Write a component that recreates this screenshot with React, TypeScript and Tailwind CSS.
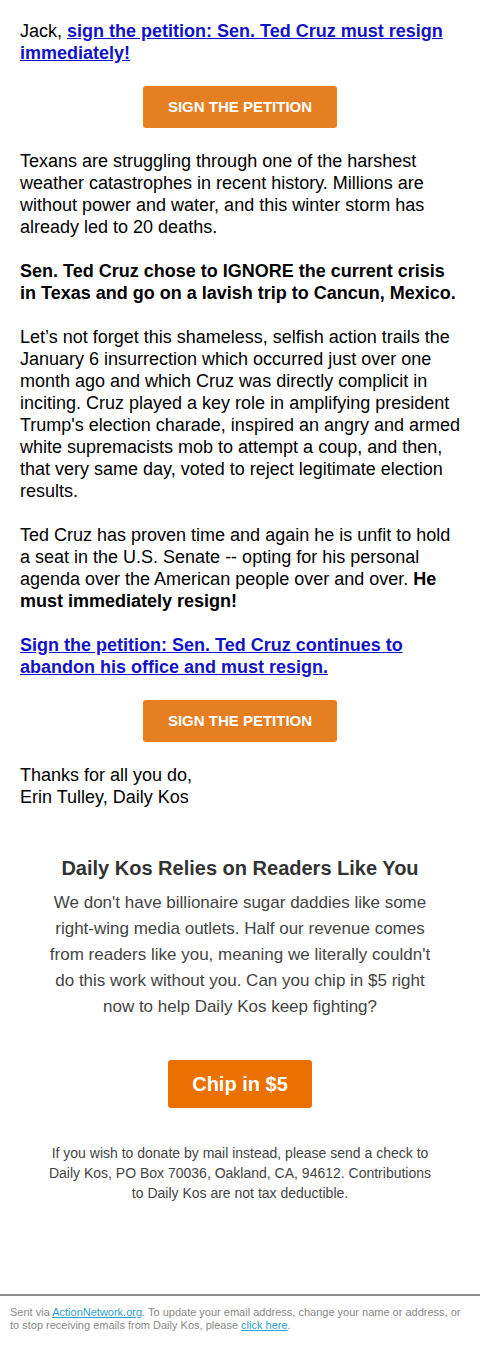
import React from 'react';

const font = { fontFamily: '"Liberation Sans", Arial, sans-serif' };

const PetitionButton = () => (
  <div className="flex justify-center my-[22px]">
    <a
      href="#"
      className="flex items-center justify-center w-[194px] h-[42px] rounded-[3px] bg-[#e67e22] text-white text-[15px] font-bold uppercase no-underline"
    >
      Sign the petition
    </a>
  </div>
);

const App = () => {
  return (
    <div className="bg-white w-[480px] min-h-[1361px] flex flex-col text-black" style={font}>
      {/* Message body */}
      <div className="px-5 pt-5 text-[18px] leading-[22px]">
        <p>
          Jack,{' '}
          <a href="#" className="font-bold text-[#1212c8] underline">
            sign the petition: Sen. Ted Cruz must resign immediately!
          </a>
        </p>

        <PetitionButton />

        <p>
          Texans are struggling through one of the harshest weather catastrophes in recent history. Millions are
          without power and water, and this winter storm has already led to 20 deaths.
        </p>

        <p className="mt-[22px] font-bold">
          Sen. Ted Cruz chose to IGNORE the current crisis in Texas and go on a lavish trip to Cancun, Mexico.
        </p>

        <p className="mt-[22px]">
          Let’s not forget this shameless, selfish action trails the January 6 insurrection which occurred just over
          one month ago and which Cruz was directly complicit in inciting. Cruz played a key role in amplifying
          president Trump's election charade, inspired an angry and armed white supremacists mob to attempt a coup,
          and then, that very same day, voted to reject legitimate election results.
        </p>

        <p className="mt-[22px]">
          Ted Cruz has proven time and again he is unfit to hold a seat in the U.S. Senate -- opting for his personal
          agenda over the American people over and over. <strong>He must immediately resign!</strong>
        </p>

        <p className="mt-[22px]">
          <a href="#" className="font-bold text-[#1212c8] underline">
            Sign the petition: Sen. Ted Cruz continues to abandon his office and must resign.
          </a>
        </p>

        <PetitionButton />

        <p>
          Thanks for all you do,
          <br />
          Erin Tulley, Daily Kos
        </p>
      </div>

      {/* Fundraising appeal */}
      <div className="px-[48px] pt-[48px] text-center text-[#333]">
        <h2 className="text-[20px] leading-[24px] font-bold">Daily Kos Relies on Readers Like You</h2>
        <p className="mt-[10px] text-[17px] leading-[26px] text-[#444]">
          We don't have billionaire sugar daddies like some right-wing media outlets. Half our revenue comes from
          readers like you, meaning we literally couldn't do this work without you. Can you chip in $5 right now to
          help Daily Kos keep fighting?
        </p>
        <div className="flex justify-center mt-[40px]">
          <a
            href="#"
            className="flex items-center justify-center w-[144px] h-[48px] rounded-[3px] bg-[#ea7000] text-white text-[20px] font-bold no-underline"
          >
            Chip in $5
          </a>
        </div>
        <p className="mt-[35px] text-[14px] leading-[20px] text-[#444]">
          If you wish to donate by mail instead, please send a check to Daily Kos, PO Box 70036, Oakland, CA, 94612.
          Contributions to Daily Kos are not tax deductible.
        </p>
      </div>

      {/* Footer */}
      <div className="mt-[91px] border-t-2 border-[#8c8c8c] px-[10px] pt-[10px] text-[11px] leading-[13px] text-[#888]">
        Sent via{' '}
        <a href="#" className="text-[#2a9fd0] underline">
          ActionNetwork.org
        </a>
        . To update your email address, change your name or address, or to stop receiving emails from Daily Kos,
        please{' '}
        <a href="#" className="text-[#2a9fd0] underline">
          click here
        </a>
        .
      </div>
    </div>
  );
};

export default App;
